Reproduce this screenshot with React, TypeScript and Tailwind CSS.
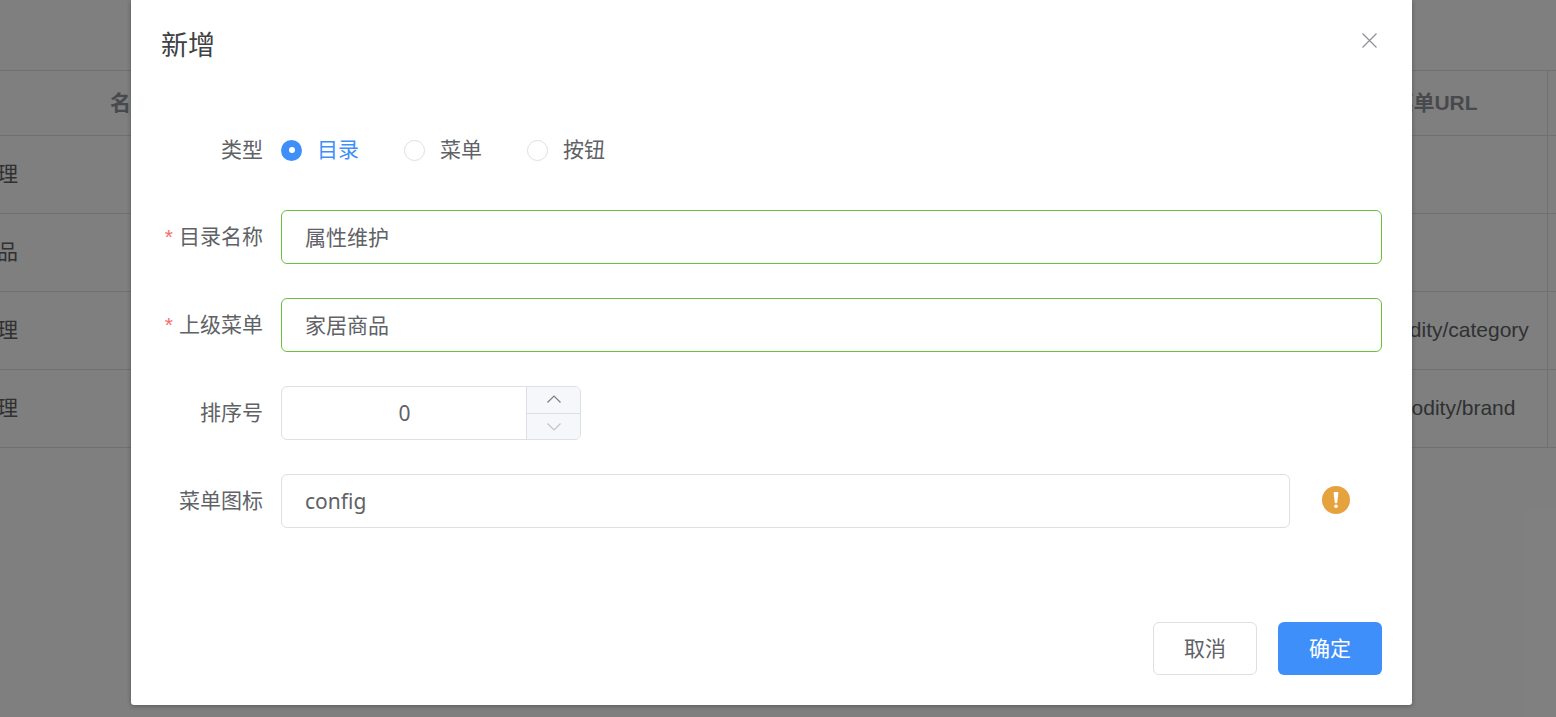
const rows = [
  { name: "理", url: "" },
  { name: "品", url: "" },
  { name: "理", url: "/commodity/category" },
  { name: "理", url: "/commodity/brand" },
]

function BackgroundTable() {
  return (
    <div className="pt-[70px] font-['Liberation_Sans','Noto_Sans_CJK_SC',sans-serif] text-[21px] text-[#606266]">
      <div className="flex h-[66px] border-y border-[#e0e0e0] font-bold text-[#909399]">
        <div className="w-[1317px] flex items-center pl-[110px]">名称</div>
        <div className="w-[231px] flex items-center justify-center pl-[6px] border-r border-[#e0e0e0]">菜单URL</div>
      </div>
      {rows.map((row) => (
        <div key={row.url + row.name} className="flex h-[78px] border-b border-[#e0e0e0]">
          <div className="w-[1317px] flex items-center pb-[2px]">
            <div className="w-[18px] flex justify-end whitespace-nowrap">{row.name}</div>
          </div>
          <div className="w-[231px] flex items-center justify-center pb-[2px] border-r border-[#e0e0e0]">{row.url}</div>
        </div>
      ))}
    </div>
  )
}

function FormRow({ label, required, children }: { label: string; required?: boolean; children: React.ReactNode }) {
  return (
    <div className="flex items-center h-[54px] mb-[34px] first:mb-[33px]">
      <label className="w-[120px] pr-[18px] flex justify-end items-center shrink-0 text-[#606266] whitespace-nowrap">
        {required && <span className="mr-[6px] text-[#f56c6c] font-['Liberation_Sans',sans-serif]">*</span>}
        {label}
      </label>
      {children}
    </div>
  )
}

function Radio({ label, checked }: { label: string; checked?: boolean }) {
  return (
    <div className="flex items-center gap-[15px] mr-[45px]">
      {checked ? (
        <span className="w-[21px] h-[21px] rounded-full bg-[#3f8ffb] flex items-center justify-center">
          <span className="w-[6px] h-[6px] rounded-full bg-white" />
        </span>
      ) : (
        <span className="w-[21px] h-[21px] rounded-full border border-[#dcdfe6] bg-white" />
      )}
      <span className={checked ? "text-[#3f8ffb]" : "text-[#606266]"}>{label}</span>
    </div>
  )
}

function TextInput({ value, valid }: { value: string; valid?: boolean }) {
  return (
    <input
      readOnly
      value={value}
      className={`flex-1 min-w-0 h-[54px] px-[23px] rounded-[6px] border outline-none bg-white text-[#606266] ${
        valid ? "border-[#67c23a] pb-[3px]" : "border-[#dcdfe6] pb-[1px]"
      }`}
    />
  )
}

export default function App() {
  return (
    <div className="relative h-screen overflow-hidden bg-white">
      <BackgroundTable />
      <div className="absolute inset-0 bg-black/50" />
      <div className="absolute left-[131px] top-0 w-[1281px] h-[705px] bg-white rounded-b-[3px] shadow-[0_1px_5px_rgba(0,0,0,0.3)] px-[30px] flex flex-col font-['Noto_Sans','Noto_Sans_CJK_SC',sans-serif] text-[21px]">
        <div className="flex justify-between h-[123px] pt-[25px]">
          <h2 className="text-[27px] leading-[40px] text-[#404144]">新增</h2>
          <button className="mt-[8px] mr-[5px] w-[15px] h-[15px] text-[#909399]">
            <svg viewBox="0 0 15 15" className="w-[15px] h-[15px] block" fill="none" stroke="currentColor" strokeWidth="1.3">
              <path d="M0.5 0.5L14.5 14.5M14.5 0.5L0.5 14.5" />
            </svg>
          </button>
        </div>

        <form className="flex-1">
          <FormRow label="类型">
            <Radio label="目录" checked />
            <Radio label="菜单" />
            <Radio label="按钮" />
          </FormRow>
          <FormRow label="目录名称" required>
            <TextInput value="属性维护" valid />
          </FormRow>
          <FormRow label="上级菜单" required>
            <TextInput value="家居商品" valid />
          </FormRow>
          <FormRow label="排序号">
            <div className="flex w-[300px] h-[54px] rounded-[6px] border border-[#dcdfe6] overflow-hidden">
              <div className="flex-1 flex items-center justify-center text-[#606266] pl-[1px] pt-[1px]">0</div>
              <div className="w-[54px] flex flex-col border-l border-[#dcdfe6] bg-[#f5f7fa]">
                <div className="h-[27px] shrink-0 flex items-center justify-center pb-[3px] border-b border-[#dcdfe6] text-[#7b7e84]">
                  <svg viewBox="0 0 14 8" className="w-[14px] h-[8px]" fill="none" stroke="currentColor" strokeWidth="1.2">
                    <path d="M0.5 7.5L7 1L13.5 7.5" />
                  </svg>
                </div>
                <div className="flex-1 flex items-center justify-center text-[#c0c4cc]">
                  <svg viewBox="0 0 14 8" className="w-[14px] h-[8px]" fill="none" stroke="currentColor" strokeWidth="1.2">
                    <path d="M0.5 0.5L7 7L13.5 0.5" />
                  </svg>
                </div>
              </div>
            </div>
          </FormRow>
          <FormRow label="菜单图标">
            <TextInput value="config" />
            <div className="w-[92px] shrink-0 flex justify-end pr-[32px] pb-[2px]">
              <svg viewBox="0 0 28 28" className="w-[28px] h-[28px]">
                <circle cx="14" cy="14" r="14" fill="#e6a23c" />
                <path d="M11.6 7.2c0-.8.6-1.2 1.2-1.2h2.4c.6 0 1.2.4 1.2 1.2L15.2 16.6c0 .4-.3.6-.6.6h-1.2c-.3 0-.6-.2-.6-.6z" fill="#fff" />
                <circle cx="14" cy="20.2" r="1.8" fill="#fff" />
              </svg>
            </div>
          </FormRow>
        </form>

        <div className="flex justify-end gap-[21px] pb-[30px]">
          <button className="w-[104px] h-[53px] rounded-[6px] border border-[#dcdfe6] bg-white text-[#606266]">取消</button>
          <button className="w-[104px] h-[53px] rounded-[6px] bg-[#3f8ffb] text-white">确定</button>
        </div>
      </div>
    </div>
  )
}
